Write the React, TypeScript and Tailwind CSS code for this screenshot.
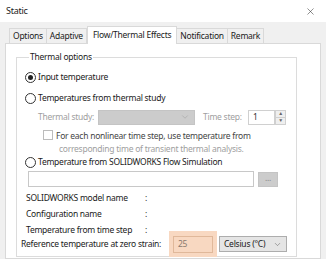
import { X, ChevronDown } from 'lucide-react';

const font = { fontFamily: '"Noto Sans", "Open Sans", sans-serif' };

function Radio({ checked = false }: { checked?: boolean }) {
  return (
    <span className="w-[11px] h-[11px] rounded-full border border-[#333] bg-white flex items-center justify-center shrink-0">
      {checked && <span className="w-[5px] h-[5px] rounded-full bg-[#222]" />}
    </span>
  );
}

export default function App() {
  const tabs = ['Options', 'Adaptive', 'Flow/Thermal Effects', 'Notification', 'Remark'];

  return (
    <div
      className="w-[326px] h-[259px] overflow-hidden flex flex-col bg-[#f0f0f0] text-[8.5px] tracking-[-0.25px] text-[#1a1a1a] whitespace-nowrap"
      style={font}
    >
      {/* Title bar */}
      <div className="h-[22px] bg-white flex items-center justify-between pl-[6px] pr-[10px] shrink-0">
        <span className="text-[9px]">Static</span>
        <X size={11} strokeWidth={1.2} className="text-[#333]" />
      </div>

      {/* Tabs */}
      <div className="h-[21px] flex items-end pl-[9px] shrink-0">
        {tabs.map((t) => {
          const active = t === 'Flow/Thermal Effects';
          return (
            <div
              key={t}
              className={
                active
                  ? 'h-[18px] px-[5px] bg-white border border-[#d9d9d9] border-b-0 -mb-px relative z-10 flex items-center'
                  : 'h-[15px] px-[3px] bg-[#f0f0f0] border border-[#d9d9d9] border-b-0 -ml-px first:ml-0 flex items-center'
              }
            >
              {t}
            </div>
          );
        })}
      </div>

      {/* Panel */}
      <div className="ml-[5px] w-[316px] flex-1 bg-white border border-[#d9d9d9] pl-[10px] pt-[7px]">
        <fieldset className="w-[281px] h-[206px] border border-[#dcdcdc] pl-[8px]">
          <legend className="ml-[4px] px-[1px] leading-[12px]">Thermal options</legend>

          <div className="flex items-center gap-[2px] h-[14px] mt-[7px]">
            <Radio checked />
            <span>Input temperature</span>
          </div>

          <div className="flex items-center gap-[2px] h-[14px] mt-[7px]">
            <Radio />
            <span>Temperatures from thermal study</span>
          </div>

          <div className="flex items-center h-[16px] mt-[4px] pl-[13px]">
            <span className="text-[#a0a0a0] w-[60px]">Thermal study:</span>
            <div className="w-[97px] h-[15px] bg-[#cccccc] border border-[#c4c4c4] flex items-center justify-end pr-[4px]">
              <ChevronDown size={10} strokeWidth={1.2} className="text-[#9a9a9a]" />
            </div>
            <span className="text-[#a0a0a0] ml-[8px] w-[45px]">Time step:</span>
            <div className="w-[27px] h-[15px] border border-[#d0d0d0] flex items-center pl-[4px] text-[#333]">1</div>
            <div className="w-[11px] h-[15px] flex flex-col">
              <div className="flex-1 bg-[#efefef] border border-[#d0d0d0] flex items-center justify-center text-[5px] text-[#666] leading-none">▲</div>
              <div className="flex-1 bg-[#efefef] border border-t-0 border-[#d0d0d0] flex items-center justify-center text-[5px] text-[#666] leading-none">▼</div>
            </div>
          </div>

          <div className="flex mt-[4px] pl-[18px]">
            <span className="w-[10px] h-[10px] border border-[#bcbcbc] bg-white mt-[1px] shrink-0" />
            <div className="ml-[3px] leading-[13px]">
              <div className="text-[#444]">For each nonlinear time step, use temperature from</div>
              <div className="text-[#a0a0a0] pl-[3px]">corresponding time of transient thermal analysis.</div>
            </div>
          </div>

          <div className="flex items-center gap-[2px] h-[14px]">
            <Radio />
            <span>Temperature from SOLIDWORKS Flow Simulation</span>
          </div>

          <div className="flex items-center h-[16px] mt-[2px] pl-[3px]">
            <div className="w-[226px] h-[16px] border border-[#c8c8c8] bg-white" />
            <div className="ml-[4px] w-[20px] h-[15px] bg-[#cccccc] border border-[#c4c4c4] flex items-center justify-center text-[#888] leading-none pb-[2px]">...</div>
          </div>

          <div className="pl-[1px] mt-[3px] leading-[16px]">
            <div className="flex"><span className="w-[119px]">SOLIDWORKS model name</span><span>:</span></div>
            <div className="flex"><span className="w-[119px]">Configuration name</span><span>:</span></div>
            <div className="flex"><span className="w-[119px]">Temperature from time step</span><span>:</span></div>
          </div>

          <div className="flex items-center -ml-[4px] -mt-[7px]">
            <span className="w-[148px]">Reference temperature at zero strain:</span>
            <div className="w-[48px] h-[26px] bg-[#f8d8c1] flex items-center justify-center">
              <div className="w-[40px] h-[17px] border border-[#e0b89a] flex items-center pl-[4px] text-[#8a7a6e]">25</div>
            </div>
            <div className="ml-[2px] w-[68px] h-[16px] bg-[#e5e5e5] border border-[#adadad] flex items-center justify-between px-[4px]">
              <span>Celsius (°C)</span>
              <ChevronDown size={9} strokeWidth={1.3} className="text-[#555]" />
            </div>
          </div>
        </fieldset>
      </div>
    </div>
  );
}
